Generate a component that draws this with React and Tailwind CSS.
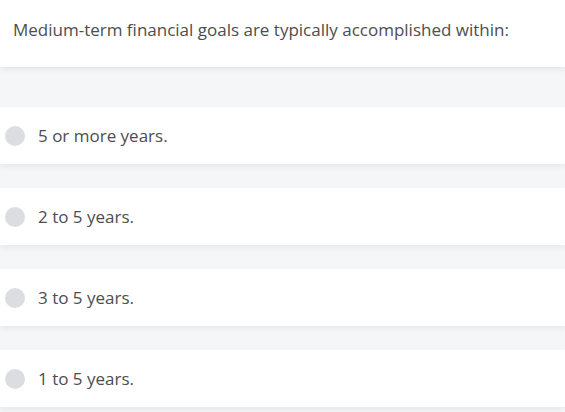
const options = ["5 or more years.", "2 to 5 years.", "3 to 5 years.", "1 to 5 years."];

export default function App() {
  return (
    <div className="w-[565px] h-[412px] overflow-hidden bg-[#f5f6f8] text-[#4d4d4d] font-['Open_Sans',sans-serif]">
      <div className="h-[67px] bg-white flex items-center px-[13px] shadow-[0_2px_6px_rgba(0,0,0,0.08)]">
        <p className="text-[17px] leading-6 -mt-[8px]">Medium-term financial goals are typically accomplished within:</p>
      </div>
      <div className="flex flex-col gap-[24px] pt-[40px]">
        {options.map((o) => (
          <label
            key={o}
            className="h-[57px] bg-white flex items-center gap-[13px] pl-[5px] shadow-[0_3px_6px_rgba(0,0,0,0.06)]"
          >
            <span className="w-[20px] h-[20px] rounded-full bg-[#dcdde0]" />
            <span className="text-[17px]">{o}</span>
          </label>
        ))}
      </div>
    </div>
  );
}
